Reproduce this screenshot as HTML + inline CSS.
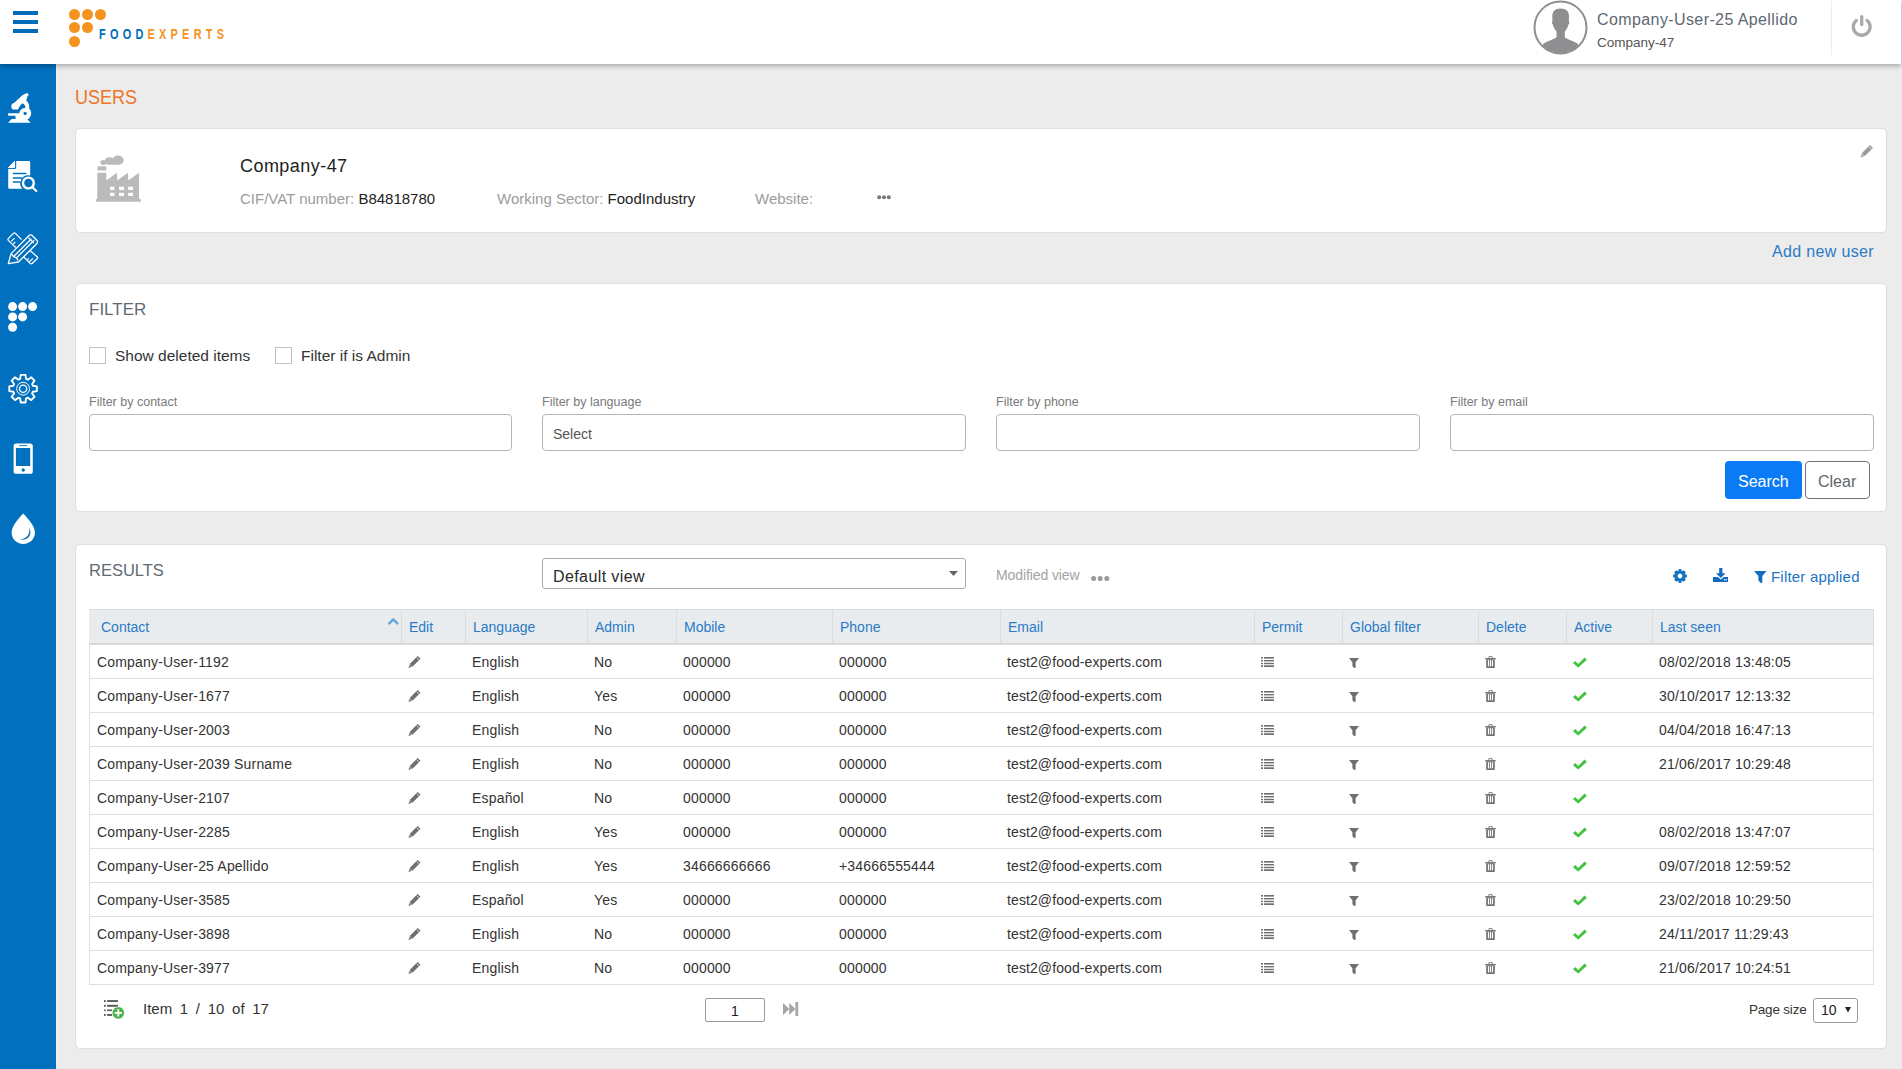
<!DOCTYPE html>
<html><head><meta charset="utf-8"><title>Users</title>
<style>
*{box-sizing:border-box;margin:0;padding:0}
html,body{width:1902px;height:1069px;overflow:hidden;background:#ececec;font-family:"Liberation Sans",sans-serif;color:#212529}
.a{position:absolute}
.t{position:absolute;white-space:nowrap;line-height:1}
#hdr{position:absolute;left:0;top:0;width:1901px;height:64px;background:#fff;box-shadow:0 2px 5px rgba(0,0,0,.3);z-index:5}
#side{position:absolute;left:0;top:64px;width:57px;height:1005px;background:#0070bf;z-index:4;border-right:1px solid #f4efef}
.bar{position:absolute;left:13px;width:25px;height:4px;background:#006bb8}
.dot{position:absolute;width:11px;height:11px;border-radius:50%;background:#f5931f}
.card{position:absolute;left:75px;width:1812px;background:#fff;border:1px solid #dedede;border-radius:5px}
.inp{position:absolute;top:414px;width:424px;height:37px;border:1px solid #b5b5b5;border-radius:4px;background:#fff}
.lbl{position:absolute;top:396px;font-size:12.5px;color:#7a7a7a;white-space:nowrap;line-height:1}
.cb{position:absolute;top:347px;width:17px;height:17px;border:1px solid #bdc2c6;background:#fff}
.th{position:absolute;top:620px;font-size:14px;color:#2a7ac4;white-space:nowrap;line-height:1}
.td{position:absolute;font-size:14px;letter-spacing:.18px;color:#333;white-space:nowrap;line-height:1}
.vl{position:absolute;top:610px;width:1px;height:33px;background:#dcdcdc}
.hl{position:absolute;left:89px;width:1785px;height:1px;background:#dedede}
svg{position:absolute;overflow:visible}
</style></head><body>
<div id="hdr">
<div class="bar" style="top:11px"></div>
<div class="bar" style="top:20px"></div>
<div class="bar" style="top:29px"></div>
<div class="dot" style="left:69px;top:9px"></div>
<div class="dot" style="left:82px;top:9px"></div>
<div class="dot" style="left:95px;top:9px"></div>
<div class="dot" style="left:69px;top:22px"></div>
<div class="dot" style="left:82px;top:22px"></div>
<div class="dot" style="left:69px;top:36px"></div>
<div class="t" style="left:99px;top:26.5px;font-size:14.5px;font-weight:bold;letter-spacing:5.7px;transform:scaleX(.75);transform-origin:0 0;color:#006bb8">FOOD<span style="color:#f5931f">EXPERTS</span></div>
<svg style="left:1533px;top:0px" width="56" height="56" viewBox="0 0 56 56">
<defs><clipPath id="avc"><circle cx="27.5" cy="27.5" r="25.5"/></clipPath></defs>
<circle cx="27.5" cy="27.5" r="26" fill="#fff" stroke="#8f8e90" stroke-width="2"/>
<g clip-path="url(#avc)" fill="#8f8e90">
<path d="M27.7 8.5 C21.5 8.5 19.2 12 19.3 16.5 L19.5 21 C18.6 21.5 18.8 23.5 19.8 24.5 C20.6 27.5 22 30 23.5 31.5 L23.5 37.5 C20 39.5 14 41 10 44 L10 56 L45 56 L45 44 C41 41 35 39.5 31.8 37.5 L31.8 31.5 C33.3 30 34.7 27.5 35.5 24.5 C36.5 23.5 36.7 21.5 35.8 21 L36 16.5 C36.1 12 33.8 8.5 27.7 8.5 Z"/>
</g></svg>
<div class="t" style="left:1597px;top:12px;font-size:16px;letter-spacing:.4px;color:#5d6873">Company-User-25 Apellido</div>
<div class="t" style="left:1597px;top:36px;font-size:13.5px;letter-spacing:0px;color:#555">Company-47</div>
<div class="a" style="left:1831px;top:1px;width:1px;height:54px;background:#ececec"></div>
<svg style="left:1850px;top:14px" width="24" height="24" viewBox="0 0 24 24">
<path d="M6.3 6.4 A8.4 8.4 0 1 0 17.1 6.4" fill="none" stroke="#a9a9a9" stroke-width="3.3" stroke-linecap="round"/>
<line x1="11.7" y1="2.7" x2="11.7" y2="10.6" stroke="#a9a9a9" stroke-width="3.3" stroke-linecap="round"/>
</svg>
</div>
<div id="side"></div>
<svg style="left:4px;top:88px;z-index:6" width="40" height="40" viewBox="0 0 40 40">
<g fill="#fff">
<path d="M4.1 34.8 L7.6 31 L11.5 31 L11.5 27.8 L4.1 27.8 L4.1 25.2 L15.2 25.2 C15.8 22 18 20 21.3 20 C21.6 18 20.8 16.8 18.4 15.3 C16.5 17 15.2 19 14 21.6 L9.5 21.6 C8 21.6 7.3 20 7.3 18 C7.3 16.5 8.5 15.2 10.3 14.8 L18.7 7 L23 5 L24.9 6.5 L23.3 8.8 L22.3 12.5 C25 14.5 25.6 17.5 25.2 20.5 C27 22.5 27.4 24 27 26.5 C26.5 29 25.2 30.6 23.4 31.5 L26.8 34.8 Z"/>
</g>
<circle cx="21.1" cy="25.4" r="1.6" fill="#0070bf"/>
</svg>
<svg style="left:4px;top:156px;z-index:6" width="40" height="40" viewBox="0 0 40 40">
<path d="M4.5 11.6 L10.6 5.2 L10.6 11.6 Z" fill="#fff" stroke="#fff" stroke-width="1" stroke-linejoin="round"/>
<path d="M12.2 5 L24.8 5 Q26.2 5 26.2 6.4 L26.2 19.6 A8 8 0 0 0 18.4 32.8 L5.6 32.8 Q4.2 32.8 4.2 31.4 L4.2 13.1 L10.5 13.1 Q12.2 13.1 12.2 11.4 Z" fill="#fff"/>
<g stroke="#0070bf" stroke-width="1.4" stroke-linecap="round"><line x1="9.4" y1="17.5" x2="21.8" y2="17.5"/><line x1="9.4" y1="22" x2="18" y2="22"/><line x1="9.4" y1="26" x2="15.6" y2="26"/></g>
<circle cx="24.4" cy="27" r="5.4" fill="none" stroke="#fff" stroke-width="2.4"/>
<line x1="28.5" y1="31.2" x2="32.3" y2="35" stroke="#fff" stroke-width="2.2" stroke-linecap="round"/>
</svg>
<svg style="left:4px;top:228px;z-index:6" width="40" height="40" viewBox="0 0 40 40">
<g fill="none" stroke="#fff" stroke-width="1.3" stroke-linejoin="round">
<path d="M11.7 19.5 L4.3 12.4 Q3.4 11.4 4.4 10.4 L9.4 5.4 Q10.4 4.4 11.4 5.4 L17.6 11.6"/>
<path d="M26.1 22.4 L33.1 28.8 Q34.1 29.8 33.1 30.8 L28.1 35.4 Q27.1 36.4 26.1 35.4 L19.6 28.8"/>
<path d="M7.2 13.4 L10.6 10.1 M9.4 15.7 L11.2 14 M23.6 31.8 L24.9 30.4 M25.4 33.9 L28.9 30.4"/>
<path d="M7.1 25.6 L24.8 7.8 Q26.6 6 28.4 7.8 L32.8 12.2 Q34.4 14 32.7 15.7 L14.4 34 L4.3 35.6 Z"/>
<path d="M7.5 25.8 L9.6 28.6 L12.5 29.9 L14 32.3 M9.6 28.6 L27.4 10.8 M12.5 29.9 L30.2 12.1 M24.4 9.6 L29.8 15"/>
</g></svg>
<svg style="left:4px;top:298px;z-index:6" width="40" height="40" viewBox="0 0 40 40"><circle cx="8.6" cy="8.6" r="4.5" fill="#fff"/><circle cx="18.6" cy="8.6" r="4.5" fill="#fff"/><circle cx="28.6" cy="8.6" r="4.5" fill="#fff"/><circle cx="8.6" cy="18.9" r="4.5" fill="#fff"/><circle cx="18.6" cy="18.9" r="4.5" fill="#fff"/><circle cx="8.6" cy="29.3" r="4.5" fill="#fff"/></svg>
<svg style="left:4px;top:368px;z-index:6" width="40" height="40" viewBox="0 0 40 40">
<path d="M16.09 10.96 L16.73 6.90 L21.47 6.90 L22.11 10.96 L23.86 11.68 L27.18 9.27 L30.53 12.62 L28.12 15.94 L28.84 17.69 L32.90 18.33 L32.90 23.07 L28.84 23.71 L28.12 25.46 L30.53 28.78 L27.18 32.13 L23.86 29.72 L22.11 30.44 L21.47 34.50 L16.73 34.50 L16.09 30.44 L14.34 29.72 L11.02 32.13 L7.67 28.78 L10.08 25.46 L9.36 23.71 L5.30 23.07 L5.30 18.33 L9.36 17.69 L10.08 15.94 L7.67 12.62 L11.02 9.27 L14.34 11.68 Z" fill="none" stroke="#fff" stroke-width="1.9" stroke-linejoin="round"/>
<circle cx="19.1" cy="20.7" r="6.4" fill="none" stroke="#fff" stroke-width="1"/>
<circle cx="19.1" cy="20.7" r="3.6" fill="none" stroke="#fff" stroke-width="1.3"/>
</svg>
<svg style="left:4px;top:438px;z-index:6" width="40" height="40" viewBox="0 0 40 40">
<path fill-rule="evenodd" fill="#fff" d="M12.2 5.5 L26.2 5.5 Q28.8 5.5 28.8 8.1 L28.8 33.2 Q28.8 35.8 26.2 35.8 L12.2 35.8 Q9.6 35.8 9.6 33.2 L9.6 8.1 Q9.6 5.5 12.2 5.5 Z M11.9 10 L26.2 10 L26.2 28 L11.9 28 Z M19.2 30.3 A1.7 1.7 0 1 0 19.21 30.3 Z"/>
<line x1="15.5" y1="7.6" x2="22.8" y2="7.6" stroke="#0070bf" stroke-width="0.9" stroke-linecap="round"/>
</svg>
<svg style="left:4px;top:508px;z-index:6" width="40" height="40" viewBox="0 0 40 40">
<path fill="#fff" d="M19.2 5.6 C15 10 7.6 18 7.6 24.6 C7.6 31.2 12.8 36 19.3 36 C25.8 36 30.9 31.2 30.9 24.6 C30.9 18 23.5 10 19.2 5.6 Z"/>
<path fill="#0070bf" d="M25.3 19 C26.8 23 26.8 26.5 24.8 29 C22.6 31.4 19.5 32.2 16.2 31.5 C19.8 31 22.5 29.6 24 27.2 C25.3 25 25.6 22 25.3 19 Z"/>
</svg>
<div class="t" style="left:75px;top:86.5px;font-size:20px;transform:scaleX(.9);transform-origin:0 0;color:#ee7627">USERS</div>
<div class="card" style="top:128px;height:105px"></div>
<svg style="left:90px;top:150px" width="60" height="60" viewBox="0 0 60 60"><g fill="#bababa">
<path d="M6 51.7 L6 49.5 L7.3 48.5 L7.3 22.8 L16.3 22.8 L16.3 30.6 L26.9 22.8 L27.3 30.4 L37.9 22.8 L38.3 30.4 L49 22.8 L49 48.5 L50.8 49.5 L50.8 51.7 Z"/>
<path d="M7.6 16.8 Q7.8 16.3 8.5 16.3 L15.6 16.3 Q16.3 16.3 16.3 17 L16.3 20.6 L7.3 20.6 Z"/>
<ellipse cx="13.4" cy="12.5" rx="3" ry="2.4"/><ellipse cx="19.3" cy="11.1" rx="4.4" ry="3.8"/><ellipse cx="28" cy="10.3" rx="5.7" ry="4.7"/><ellipse cx="23.5" cy="12.6" rx="3" ry="2.4"/>
</g><g fill="#fff">
<rect x="20" y="36.7" width="4.4" height="3.3"/><rect x="29" y="36.7" width="5" height="3.3"/><rect x="38.2" y="36.7" width="4.8" height="3.3"/>
<rect x="20" y="42.8" width="4.4" height="3.2"/><rect x="29" y="42.8" width="5" height="3.2"/><rect x="38.2" y="42.8" width="4.8" height="3.2"/>
</g></svg>
<div class="t" style="left:240px;top:157px;font-size:18px;letter-spacing:.45px;color:#222">Company-47</div>
<div class="t" style="left:240px;top:191px;font-size:15px;color:#9c9c9c">CIF/VAT number: <span style="color:#222">B84818780</span></div>
<div class="t" style="left:497px;top:191px;font-size:15px;color:#9c9c9c">Working Sector: <span style="color:#222">FoodIndustry</span></div>
<div class="t" style="left:755px;top:191px;font-size:15px;color:#9c9c9c">Website:</div>
<svg style="left:877px;top:195px" width="14" height="5" viewBox="0 0 14 5"><g fill="#777"><circle cx="2.2" cy="2.3" r="2"/><circle cx="7" cy="2.3" r="2"/><circle cx="11.8" cy="2.3" r="2"/></g></svg>
<svg style="left:1860px;top:145px" width="13" height="13" viewBox="0 0 12 12">
<line x1="3.2" y1="8.8" x2="10.6" y2="1.4" stroke="#999" stroke-width="3.8"/>
<path d="M1.9 7.5 L4.5 10.1 L0.4 11.6 Z" fill="#999"/>
<line x1="8.3" y1="1.6" x2="10.4" y2="3.7" stroke="#fff" stroke-width="0.7"/>
<line x1="1.6" y1="8.9" x2="3.1" y2="10.4" stroke="#fff" stroke-width="0.6"/>
</svg>
<div class="t" style="left:1772px;top:244px;font-size:16px;letter-spacing:.35px;color:#2b7bc6">Add new user</div>
<div class="card" style="top:283px;height:229px"></div>
<div class="t" style="left:89px;top:301px;font-size:17px;color:#5f6a74">FILTER</div>
<div class="cb" style="left:89px"></div>
<div class="t" style="left:115px;top:348px;font-size:15.5px;color:#333">Show deleted items</div>
<div class="cb" style="left:275px"></div>
<div class="t" style="left:301px;top:348px;font-size:15.5px;color:#333">Filter if is Admin</div>
<div class="lbl" style="left:89px">Filter by contact</div>
<div class="inp" style="left:89px;width:423px"></div>
<div class="lbl" style="left:542px">Filter by language</div>
<div class="inp" style="left:542px"></div>
<div class="lbl" style="left:996px">Filter by phone</div>
<div class="inp" style="left:996px"></div>
<div class="lbl" style="left:1450px">Filter by email</div>
<div class="inp" style="left:1450px"></div>
<div class="t" style="left:553px;top:427px;font-size:14px;color:#555">Select</div>
<div class="a" style="left:1725px;top:461px;width:77px;height:38px;background:#0a7bf4;border-radius:4px"></div>
<div class="t" style="left:1738px;top:473.5px;font-size:16px;color:#fff">Search</div>
<div class="a" style="left:1805px;top:461px;width:65px;height:38px;border:1px solid #6c757d;border-radius:4px;background:#fff"></div>
<div class="t" style="left:1818px;top:473.5px;font-size:16px;color:#666">Clear</div>
<div class="card" style="top:544px;height:505px"></div>
<div class="t" style="left:89px;top:562px;font-size:16.5px;color:#5f6a74">RESULTS</div>
<div class="a" style="left:542px;top:558px;width:424px;height:31px;border:1px solid #a9a9a9;border-radius:3px;background:#fff"></div>
<div class="t" style="left:553px;top:568.5px;font-size:16px;letter-spacing:.4px;color:#2a2a2a">Default view</div>
<svg style="left:949px;top:571px" width="9" height="5" viewBox="0 0 9 5"><path d="M0 0 L9 0 L4.5 5 Z" fill="#666"/></svg>
<div class="t" style="left:996px;top:568px;font-size:14px;letter-spacing:-.1px;color:#a3a3a3">Modified view</div>
<svg style="left:1091px;top:575.7px" width="19" height="6" viewBox="0 0 19 6"><g fill="#999"><circle cx="2.6" cy="2.6" r="2.5"/><circle cx="9.2" cy="2.6" r="2.5"/><circle cx="15.8" cy="2.6" r="2.5"/></g></svg>
<svg style="left:1673px;top:569px" width="14" height="14" viewBox="0 0 14 14"><path fill-rule="evenodd" fill="#106cc1" d="M11.68 5.24 L13.73 5.49 L13.73 8.51 L11.68 8.76 L11.55 9.06 L12.83 10.70 L10.70 12.83 L9.06 11.55 L8.76 11.68 L8.51 13.73 L5.49 13.73 L5.24 11.68 L4.94 11.55 L3.30 12.83 L1.17 10.70 L2.45 9.06 L2.32 8.76 L0.27 8.51 L0.27 5.49 L2.32 5.24 L2.45 4.94 L1.17 3.30 L3.30 1.17 L4.94 2.45 L5.24 2.32 L5.49 0.27 L8.51 0.27 L8.76 2.32 L9.06 2.45 L10.70 1.17 L12.83 3.30 L11.55 4.94 Z M7 4.6 A2.4 2.4 0 1 0 7.01 4.6 Z"/></svg>
<svg style="left:1713px;top:568px" width="16" height="15" viewBox="0 0 16 15"><g fill="#106cc1">
<rect x="6.2" y="0" width="3.2" height="6"/><path d="M3 5.2 L12.6 5.2 L7.8 10 Z"/>
<path d="M0 9 L4.9 9 L7.8 11.6 L10.7 9 L15 9 L15 14 L0 14 Z"/></g>
<g fill="#fff"><rect x="10.8" y="11.2" width="1.3" height="1.2"/><rect x="12.6" y="11.2" width="1.3" height="1.2"/></g></svg>
<svg style="left:1754px;top:571px" width="13" height="12" viewBox="0 0 13 12"><path d="M0 0 L12.6 0 L8.3 5 L8.3 12 L6.6 11.8 L4.4 9.6 L4.4 5 Z" fill="#106cc1"/></svg>
<div class="t" style="left:1771px;top:569px;font-size:15px;letter-spacing:.2px;color:#1a75c5">Filter applied</div>
<div class="a" style="left:89px;top:609px;width:1785px;height:36px;background:#e9ecef;border-top:1px solid #dcdcdc;border-bottom:2px solid #d9d9d9"></div>
<div class="vl" style="left:401px"></div>
<div class="vl" style="left:465px"></div>
<div class="vl" style="left:587px"></div>
<div class="vl" style="left:676px"></div>
<div class="vl" style="left:832px"></div>
<div class="vl" style="left:1000px"></div>
<div class="vl" style="left:1254px"></div>
<div class="vl" style="left:1342px"></div>
<div class="vl" style="left:1478px"></div>
<div class="vl" style="left:1566px"></div>
<div class="vl" style="left:1652px"></div>
<div class="th" style="left:101px">Contact</div>
<div class="th" style="left:409px">Edit</div>
<div class="th" style="left:473px">Language</div>
<div class="th" style="left:595px">Admin</div>
<div class="th" style="left:684px">Mobile</div>
<div class="th" style="left:840px">Phone</div>
<div class="th" style="left:1008px">Email</div>
<div class="th" style="left:1262px">Permit</div>
<div class="th" style="left:1350px">Global filter</div>
<div class="th" style="left:1486px">Delete</div>
<div class="th" style="left:1574px">Active</div>
<div class="th" style="left:1660px">Last seen</div>
<svg style="left:388px;top:617px" width="11" height="8" viewBox="0 0 11 8"><path d="M1.3 6.3 L5.3 2.3 L9.3 6.3" fill="none" stroke="#6aa6dd" stroke-width="2.6" stroke-linecap="round" stroke-linejoin="round"/></svg>
<div class="a" style="left:89px;top:645px;width:1px;height:340px;background:#dedede"></div>
<div class="a" style="left:1873px;top:609px;width:1px;height:376px;background:#dedede"></div>
<div class="hl" style="top:678px"></div>
<div class="td" style="left:97px;top:655px">Company-User-1192</div>
<svg style="left:408px;top:656px" width="12.5" height="12.5" viewBox="0 0 12 12">
<line x1="3.2" y1="8.8" x2="10.6" y2="1.4" stroke="#6f6f6f" stroke-width="3.8"/>
<path d="M1.9 7.5 L4.5 10.1 L0.4 11.6 Z" fill="#6f6f6f"/>
<line x1="8.3" y1="1.6" x2="10.4" y2="3.7" stroke="#fff" stroke-width="0.7"/>
<line x1="1.6" y1="8.9" x2="3.1" y2="10.4" stroke="#fff" stroke-width="0.6"/>
</svg>
<div class="td" style="left:472px;top:655px">English</div>
<div class="td" style="left:594px;top:655px">No</div>
<div class="td" style="left:683px;top:655px">000000</div>
<div class="td" style="left:839px;top:655px">000000</div>
<div class="td" style="left:1007px;top:655px;letter-spacing:.1px">test2@food-experts.com</div>
<svg style="left:1261px;top:657px" width="13" height="11" viewBox="0 0 13 11"><g fill="#6f6f6f">
<rect x="0" y="0" width="2" height="1.6"/><rect x="3" y="0" width="10" height="1.6"/>
<rect x="0" y="3" width="2" height="1.4"/><rect x="3" y="3" width="10" height="1.4"/>
<rect x="0" y="5.8" width="2" height="1.4"/><rect x="3" y="5.8" width="10" height="1.4"/>
<rect x="0" y="8.3" width="2" height="1.7"/><rect x="3" y="8.3" width="10" height="1.7"/>
</g></svg>
<svg style="left:1349px;top:658px" width="10" height="10" viewBox="0 0 10 10">
<path d="M0 0 L10 0 L6.6 4.2 L6.6 10 L4.8 9.8 L3.4 8.2 L3.4 4.2 Z" fill="#6f6f6f"/></svg>
<svg style="left:1485px;top:656px" width="11" height="12" viewBox="0 0 11 12">
<g fill="#6f6f6f"><path d="M3.3 2.2 L3.8 0.3 L7.3 0.3 L7.8 2.2 L6.9 2.2 L6.5 1 L4.6 1 L4.2 2.2 Z"/>
<rect x="0.2" y="2.1" width="10.6" height="1.2"/>
<path d="M1.2 3.3 L9.8 3.3 L9.8 11.2 Q9.8 11.9 9.1 11.9 L1.9 11.9 Q1.2 11.9 1.2 11.2 Z"/></g>
<g fill="#fff"><rect x="2.9" y="4.2" width="1.2" height="6.2"/><rect x="4.9" y="4.2" width="1.2" height="6.2"/><rect x="6.9" y="4.2" width="1.2" height="6.2"/></g>
</svg>
<svg style="left:1573px;top:657px" width="14" height="11" viewBox="0 0 14 11">
<path d="M0 6.2 L2.2 3.9 L5.2 6.9 L11.6 0.5 L13.9 2.8 L5.2 10.4 Z" fill="#43c23d"/></svg>
<div class="td" style="left:1659px;top:655px">08/02/2018 13:48:05</div>
<div class="hl" style="top:712px"></div>
<div class="td" style="left:97px;top:689px">Company-User-1677</div>
<svg style="left:408px;top:690px" width="12.5" height="12.5" viewBox="0 0 12 12">
<line x1="3.2" y1="8.8" x2="10.6" y2="1.4" stroke="#6f6f6f" stroke-width="3.8"/>
<path d="M1.9 7.5 L4.5 10.1 L0.4 11.6 Z" fill="#6f6f6f"/>
<line x1="8.3" y1="1.6" x2="10.4" y2="3.7" stroke="#fff" stroke-width="0.7"/>
<line x1="1.6" y1="8.9" x2="3.1" y2="10.4" stroke="#fff" stroke-width="0.6"/>
</svg>
<div class="td" style="left:472px;top:689px">English</div>
<div class="td" style="left:594px;top:689px">Yes</div>
<div class="td" style="left:683px;top:689px">000000</div>
<div class="td" style="left:839px;top:689px">000000</div>
<div class="td" style="left:1007px;top:689px;letter-spacing:.1px">test2@food-experts.com</div>
<svg style="left:1261px;top:691px" width="13" height="11" viewBox="0 0 13 11"><g fill="#6f6f6f">
<rect x="0" y="0" width="2" height="1.6"/><rect x="3" y="0" width="10" height="1.6"/>
<rect x="0" y="3" width="2" height="1.4"/><rect x="3" y="3" width="10" height="1.4"/>
<rect x="0" y="5.8" width="2" height="1.4"/><rect x="3" y="5.8" width="10" height="1.4"/>
<rect x="0" y="8.3" width="2" height="1.7"/><rect x="3" y="8.3" width="10" height="1.7"/>
</g></svg>
<svg style="left:1349px;top:692px" width="10" height="10" viewBox="0 0 10 10">
<path d="M0 0 L10 0 L6.6 4.2 L6.6 10 L4.8 9.8 L3.4 8.2 L3.4 4.2 Z" fill="#6f6f6f"/></svg>
<svg style="left:1485px;top:690px" width="11" height="12" viewBox="0 0 11 12">
<g fill="#6f6f6f"><path d="M3.3 2.2 L3.8 0.3 L7.3 0.3 L7.8 2.2 L6.9 2.2 L6.5 1 L4.6 1 L4.2 2.2 Z"/>
<rect x="0.2" y="2.1" width="10.6" height="1.2"/>
<path d="M1.2 3.3 L9.8 3.3 L9.8 11.2 Q9.8 11.9 9.1 11.9 L1.9 11.9 Q1.2 11.9 1.2 11.2 Z"/></g>
<g fill="#fff"><rect x="2.9" y="4.2" width="1.2" height="6.2"/><rect x="4.9" y="4.2" width="1.2" height="6.2"/><rect x="6.9" y="4.2" width="1.2" height="6.2"/></g>
</svg>
<svg style="left:1573px;top:691px" width="14" height="11" viewBox="0 0 14 11">
<path d="M0 6.2 L2.2 3.9 L5.2 6.9 L11.6 0.5 L13.9 2.8 L5.2 10.4 Z" fill="#43c23d"/></svg>
<div class="td" style="left:1659px;top:689px">30/10/2017 12:13:32</div>
<div class="hl" style="top:746px"></div>
<div class="td" style="left:97px;top:723px">Company-User-2003</div>
<svg style="left:408px;top:724px" width="12.5" height="12.5" viewBox="0 0 12 12">
<line x1="3.2" y1="8.8" x2="10.6" y2="1.4" stroke="#6f6f6f" stroke-width="3.8"/>
<path d="M1.9 7.5 L4.5 10.1 L0.4 11.6 Z" fill="#6f6f6f"/>
<line x1="8.3" y1="1.6" x2="10.4" y2="3.7" stroke="#fff" stroke-width="0.7"/>
<line x1="1.6" y1="8.9" x2="3.1" y2="10.4" stroke="#fff" stroke-width="0.6"/>
</svg>
<div class="td" style="left:472px;top:723px">English</div>
<div class="td" style="left:594px;top:723px">No</div>
<div class="td" style="left:683px;top:723px">000000</div>
<div class="td" style="left:839px;top:723px">000000</div>
<div class="td" style="left:1007px;top:723px;letter-spacing:.1px">test2@food-experts.com</div>
<svg style="left:1261px;top:725px" width="13" height="11" viewBox="0 0 13 11"><g fill="#6f6f6f">
<rect x="0" y="0" width="2" height="1.6"/><rect x="3" y="0" width="10" height="1.6"/>
<rect x="0" y="3" width="2" height="1.4"/><rect x="3" y="3" width="10" height="1.4"/>
<rect x="0" y="5.8" width="2" height="1.4"/><rect x="3" y="5.8" width="10" height="1.4"/>
<rect x="0" y="8.3" width="2" height="1.7"/><rect x="3" y="8.3" width="10" height="1.7"/>
</g></svg>
<svg style="left:1349px;top:726px" width="10" height="10" viewBox="0 0 10 10">
<path d="M0 0 L10 0 L6.6 4.2 L6.6 10 L4.8 9.8 L3.4 8.2 L3.4 4.2 Z" fill="#6f6f6f"/></svg>
<svg style="left:1485px;top:724px" width="11" height="12" viewBox="0 0 11 12">
<g fill="#6f6f6f"><path d="M3.3 2.2 L3.8 0.3 L7.3 0.3 L7.8 2.2 L6.9 2.2 L6.5 1 L4.6 1 L4.2 2.2 Z"/>
<rect x="0.2" y="2.1" width="10.6" height="1.2"/>
<path d="M1.2 3.3 L9.8 3.3 L9.8 11.2 Q9.8 11.9 9.1 11.9 L1.9 11.9 Q1.2 11.9 1.2 11.2 Z"/></g>
<g fill="#fff"><rect x="2.9" y="4.2" width="1.2" height="6.2"/><rect x="4.9" y="4.2" width="1.2" height="6.2"/><rect x="6.9" y="4.2" width="1.2" height="6.2"/></g>
</svg>
<svg style="left:1573px;top:725px" width="14" height="11" viewBox="0 0 14 11">
<path d="M0 6.2 L2.2 3.9 L5.2 6.9 L11.6 0.5 L13.9 2.8 L5.2 10.4 Z" fill="#43c23d"/></svg>
<div class="td" style="left:1659px;top:723px">04/04/2018 16:47:13</div>
<div class="hl" style="top:780px"></div>
<div class="td" style="left:97px;top:757px">Company-User-2039 Surname</div>
<svg style="left:408px;top:758px" width="12.5" height="12.5" viewBox="0 0 12 12">
<line x1="3.2" y1="8.8" x2="10.6" y2="1.4" stroke="#6f6f6f" stroke-width="3.8"/>
<path d="M1.9 7.5 L4.5 10.1 L0.4 11.6 Z" fill="#6f6f6f"/>
<line x1="8.3" y1="1.6" x2="10.4" y2="3.7" stroke="#fff" stroke-width="0.7"/>
<line x1="1.6" y1="8.9" x2="3.1" y2="10.4" stroke="#fff" stroke-width="0.6"/>
</svg>
<div class="td" style="left:472px;top:757px">English</div>
<div class="td" style="left:594px;top:757px">No</div>
<div class="td" style="left:683px;top:757px">000000</div>
<div class="td" style="left:839px;top:757px">000000</div>
<div class="td" style="left:1007px;top:757px;letter-spacing:.1px">test2@food-experts.com</div>
<svg style="left:1261px;top:759px" width="13" height="11" viewBox="0 0 13 11"><g fill="#6f6f6f">
<rect x="0" y="0" width="2" height="1.6"/><rect x="3" y="0" width="10" height="1.6"/>
<rect x="0" y="3" width="2" height="1.4"/><rect x="3" y="3" width="10" height="1.4"/>
<rect x="0" y="5.8" width="2" height="1.4"/><rect x="3" y="5.8" width="10" height="1.4"/>
<rect x="0" y="8.3" width="2" height="1.7"/><rect x="3" y="8.3" width="10" height="1.7"/>
</g></svg>
<svg style="left:1349px;top:760px" width="10" height="10" viewBox="0 0 10 10">
<path d="M0 0 L10 0 L6.6 4.2 L6.6 10 L4.8 9.8 L3.4 8.2 L3.4 4.2 Z" fill="#6f6f6f"/></svg>
<svg style="left:1485px;top:758px" width="11" height="12" viewBox="0 0 11 12">
<g fill="#6f6f6f"><path d="M3.3 2.2 L3.8 0.3 L7.3 0.3 L7.8 2.2 L6.9 2.2 L6.5 1 L4.6 1 L4.2 2.2 Z"/>
<rect x="0.2" y="2.1" width="10.6" height="1.2"/>
<path d="M1.2 3.3 L9.8 3.3 L9.8 11.2 Q9.8 11.9 9.1 11.9 L1.9 11.9 Q1.2 11.9 1.2 11.2 Z"/></g>
<g fill="#fff"><rect x="2.9" y="4.2" width="1.2" height="6.2"/><rect x="4.9" y="4.2" width="1.2" height="6.2"/><rect x="6.9" y="4.2" width="1.2" height="6.2"/></g>
</svg>
<svg style="left:1573px;top:759px" width="14" height="11" viewBox="0 0 14 11">
<path d="M0 6.2 L2.2 3.9 L5.2 6.9 L11.6 0.5 L13.9 2.8 L5.2 10.4 Z" fill="#43c23d"/></svg>
<div class="td" style="left:1659px;top:757px">21/06/2017 10:29:48</div>
<div class="hl" style="top:814px"></div>
<div class="td" style="left:97px;top:791px">Company-User-2107</div>
<svg style="left:408px;top:792px" width="12.5" height="12.5" viewBox="0 0 12 12">
<line x1="3.2" y1="8.8" x2="10.6" y2="1.4" stroke="#6f6f6f" stroke-width="3.8"/>
<path d="M1.9 7.5 L4.5 10.1 L0.4 11.6 Z" fill="#6f6f6f"/>
<line x1="8.3" y1="1.6" x2="10.4" y2="3.7" stroke="#fff" stroke-width="0.7"/>
<line x1="1.6" y1="8.9" x2="3.1" y2="10.4" stroke="#fff" stroke-width="0.6"/>
</svg>
<div class="td" style="left:472px;top:791px">Español</div>
<div class="td" style="left:594px;top:791px">No</div>
<div class="td" style="left:683px;top:791px">000000</div>
<div class="td" style="left:839px;top:791px">000000</div>
<div class="td" style="left:1007px;top:791px;letter-spacing:.1px">test2@food-experts.com</div>
<svg style="left:1261px;top:793px" width="13" height="11" viewBox="0 0 13 11"><g fill="#6f6f6f">
<rect x="0" y="0" width="2" height="1.6"/><rect x="3" y="0" width="10" height="1.6"/>
<rect x="0" y="3" width="2" height="1.4"/><rect x="3" y="3" width="10" height="1.4"/>
<rect x="0" y="5.8" width="2" height="1.4"/><rect x="3" y="5.8" width="10" height="1.4"/>
<rect x="0" y="8.3" width="2" height="1.7"/><rect x="3" y="8.3" width="10" height="1.7"/>
</g></svg>
<svg style="left:1349px;top:794px" width="10" height="10" viewBox="0 0 10 10">
<path d="M0 0 L10 0 L6.6 4.2 L6.6 10 L4.8 9.8 L3.4 8.2 L3.4 4.2 Z" fill="#6f6f6f"/></svg>
<svg style="left:1485px;top:792px" width="11" height="12" viewBox="0 0 11 12">
<g fill="#6f6f6f"><path d="M3.3 2.2 L3.8 0.3 L7.3 0.3 L7.8 2.2 L6.9 2.2 L6.5 1 L4.6 1 L4.2 2.2 Z"/>
<rect x="0.2" y="2.1" width="10.6" height="1.2"/>
<path d="M1.2 3.3 L9.8 3.3 L9.8 11.2 Q9.8 11.9 9.1 11.9 L1.9 11.9 Q1.2 11.9 1.2 11.2 Z"/></g>
<g fill="#fff"><rect x="2.9" y="4.2" width="1.2" height="6.2"/><rect x="4.9" y="4.2" width="1.2" height="6.2"/><rect x="6.9" y="4.2" width="1.2" height="6.2"/></g>
</svg>
<svg style="left:1573px;top:793px" width="14" height="11" viewBox="0 0 14 11">
<path d="M0 6.2 L2.2 3.9 L5.2 6.9 L11.6 0.5 L13.9 2.8 L5.2 10.4 Z" fill="#43c23d"/></svg>
<div class="hl" style="top:848px"></div>
<div class="td" style="left:97px;top:825px">Company-User-2285</div>
<svg style="left:408px;top:826px" width="12.5" height="12.5" viewBox="0 0 12 12">
<line x1="3.2" y1="8.8" x2="10.6" y2="1.4" stroke="#6f6f6f" stroke-width="3.8"/>
<path d="M1.9 7.5 L4.5 10.1 L0.4 11.6 Z" fill="#6f6f6f"/>
<line x1="8.3" y1="1.6" x2="10.4" y2="3.7" stroke="#fff" stroke-width="0.7"/>
<line x1="1.6" y1="8.9" x2="3.1" y2="10.4" stroke="#fff" stroke-width="0.6"/>
</svg>
<div class="td" style="left:472px;top:825px">English</div>
<div class="td" style="left:594px;top:825px">Yes</div>
<div class="td" style="left:683px;top:825px">000000</div>
<div class="td" style="left:839px;top:825px">000000</div>
<div class="td" style="left:1007px;top:825px;letter-spacing:.1px">test2@food-experts.com</div>
<svg style="left:1261px;top:827px" width="13" height="11" viewBox="0 0 13 11"><g fill="#6f6f6f">
<rect x="0" y="0" width="2" height="1.6"/><rect x="3" y="0" width="10" height="1.6"/>
<rect x="0" y="3" width="2" height="1.4"/><rect x="3" y="3" width="10" height="1.4"/>
<rect x="0" y="5.8" width="2" height="1.4"/><rect x="3" y="5.8" width="10" height="1.4"/>
<rect x="0" y="8.3" width="2" height="1.7"/><rect x="3" y="8.3" width="10" height="1.7"/>
</g></svg>
<svg style="left:1349px;top:828px" width="10" height="10" viewBox="0 0 10 10">
<path d="M0 0 L10 0 L6.6 4.2 L6.6 10 L4.8 9.8 L3.4 8.2 L3.4 4.2 Z" fill="#6f6f6f"/></svg>
<svg style="left:1485px;top:826px" width="11" height="12" viewBox="0 0 11 12">
<g fill="#6f6f6f"><path d="M3.3 2.2 L3.8 0.3 L7.3 0.3 L7.8 2.2 L6.9 2.2 L6.5 1 L4.6 1 L4.2 2.2 Z"/>
<rect x="0.2" y="2.1" width="10.6" height="1.2"/>
<path d="M1.2 3.3 L9.8 3.3 L9.8 11.2 Q9.8 11.9 9.1 11.9 L1.9 11.9 Q1.2 11.9 1.2 11.2 Z"/></g>
<g fill="#fff"><rect x="2.9" y="4.2" width="1.2" height="6.2"/><rect x="4.9" y="4.2" width="1.2" height="6.2"/><rect x="6.9" y="4.2" width="1.2" height="6.2"/></g>
</svg>
<svg style="left:1573px;top:827px" width="14" height="11" viewBox="0 0 14 11">
<path d="M0 6.2 L2.2 3.9 L5.2 6.9 L11.6 0.5 L13.9 2.8 L5.2 10.4 Z" fill="#43c23d"/></svg>
<div class="td" style="left:1659px;top:825px">08/02/2018 13:47:07</div>
<div class="hl" style="top:882px"></div>
<div class="td" style="left:97px;top:859px">Company-User-25 Apellido</div>
<svg style="left:408px;top:860px" width="12.5" height="12.5" viewBox="0 0 12 12">
<line x1="3.2" y1="8.8" x2="10.6" y2="1.4" stroke="#6f6f6f" stroke-width="3.8"/>
<path d="M1.9 7.5 L4.5 10.1 L0.4 11.6 Z" fill="#6f6f6f"/>
<line x1="8.3" y1="1.6" x2="10.4" y2="3.7" stroke="#fff" stroke-width="0.7"/>
<line x1="1.6" y1="8.9" x2="3.1" y2="10.4" stroke="#fff" stroke-width="0.6"/>
</svg>
<div class="td" style="left:472px;top:859px">English</div>
<div class="td" style="left:594px;top:859px">Yes</div>
<div class="td" style="left:683px;top:859px">34666666666</div>
<div class="td" style="left:839px;top:859px">+34666555444</div>
<div class="td" style="left:1007px;top:859px;letter-spacing:.1px">test2@food-experts.com</div>
<svg style="left:1261px;top:861px" width="13" height="11" viewBox="0 0 13 11"><g fill="#6f6f6f">
<rect x="0" y="0" width="2" height="1.6"/><rect x="3" y="0" width="10" height="1.6"/>
<rect x="0" y="3" width="2" height="1.4"/><rect x="3" y="3" width="10" height="1.4"/>
<rect x="0" y="5.8" width="2" height="1.4"/><rect x="3" y="5.8" width="10" height="1.4"/>
<rect x="0" y="8.3" width="2" height="1.7"/><rect x="3" y="8.3" width="10" height="1.7"/>
</g></svg>
<svg style="left:1349px;top:862px" width="10" height="10" viewBox="0 0 10 10">
<path d="M0 0 L10 0 L6.6 4.2 L6.6 10 L4.8 9.8 L3.4 8.2 L3.4 4.2 Z" fill="#6f6f6f"/></svg>
<svg style="left:1485px;top:860px" width="11" height="12" viewBox="0 0 11 12">
<g fill="#6f6f6f"><path d="M3.3 2.2 L3.8 0.3 L7.3 0.3 L7.8 2.2 L6.9 2.2 L6.5 1 L4.6 1 L4.2 2.2 Z"/>
<rect x="0.2" y="2.1" width="10.6" height="1.2"/>
<path d="M1.2 3.3 L9.8 3.3 L9.8 11.2 Q9.8 11.9 9.1 11.9 L1.9 11.9 Q1.2 11.9 1.2 11.2 Z"/></g>
<g fill="#fff"><rect x="2.9" y="4.2" width="1.2" height="6.2"/><rect x="4.9" y="4.2" width="1.2" height="6.2"/><rect x="6.9" y="4.2" width="1.2" height="6.2"/></g>
</svg>
<svg style="left:1573px;top:861px" width="14" height="11" viewBox="0 0 14 11">
<path d="M0 6.2 L2.2 3.9 L5.2 6.9 L11.6 0.5 L13.9 2.8 L5.2 10.4 Z" fill="#43c23d"/></svg>
<div class="td" style="left:1659px;top:859px">09/07/2018 12:59:52</div>
<div class="hl" style="top:916px"></div>
<div class="td" style="left:97px;top:893px">Company-User-3585</div>
<svg style="left:408px;top:894px" width="12.5" height="12.5" viewBox="0 0 12 12">
<line x1="3.2" y1="8.8" x2="10.6" y2="1.4" stroke="#6f6f6f" stroke-width="3.8"/>
<path d="M1.9 7.5 L4.5 10.1 L0.4 11.6 Z" fill="#6f6f6f"/>
<line x1="8.3" y1="1.6" x2="10.4" y2="3.7" stroke="#fff" stroke-width="0.7"/>
<line x1="1.6" y1="8.9" x2="3.1" y2="10.4" stroke="#fff" stroke-width="0.6"/>
</svg>
<div class="td" style="left:472px;top:893px">Español</div>
<div class="td" style="left:594px;top:893px">Yes</div>
<div class="td" style="left:683px;top:893px">000000</div>
<div class="td" style="left:839px;top:893px">000000</div>
<div class="td" style="left:1007px;top:893px;letter-spacing:.1px">test2@food-experts.com</div>
<svg style="left:1261px;top:895px" width="13" height="11" viewBox="0 0 13 11"><g fill="#6f6f6f">
<rect x="0" y="0" width="2" height="1.6"/><rect x="3" y="0" width="10" height="1.6"/>
<rect x="0" y="3" width="2" height="1.4"/><rect x="3" y="3" width="10" height="1.4"/>
<rect x="0" y="5.8" width="2" height="1.4"/><rect x="3" y="5.8" width="10" height="1.4"/>
<rect x="0" y="8.3" width="2" height="1.7"/><rect x="3" y="8.3" width="10" height="1.7"/>
</g></svg>
<svg style="left:1349px;top:896px" width="10" height="10" viewBox="0 0 10 10">
<path d="M0 0 L10 0 L6.6 4.2 L6.6 10 L4.8 9.8 L3.4 8.2 L3.4 4.2 Z" fill="#6f6f6f"/></svg>
<svg style="left:1485px;top:894px" width="11" height="12" viewBox="0 0 11 12">
<g fill="#6f6f6f"><path d="M3.3 2.2 L3.8 0.3 L7.3 0.3 L7.8 2.2 L6.9 2.2 L6.5 1 L4.6 1 L4.2 2.2 Z"/>
<rect x="0.2" y="2.1" width="10.6" height="1.2"/>
<path d="M1.2 3.3 L9.8 3.3 L9.8 11.2 Q9.8 11.9 9.1 11.9 L1.9 11.9 Q1.2 11.9 1.2 11.2 Z"/></g>
<g fill="#fff"><rect x="2.9" y="4.2" width="1.2" height="6.2"/><rect x="4.9" y="4.2" width="1.2" height="6.2"/><rect x="6.9" y="4.2" width="1.2" height="6.2"/></g>
</svg>
<svg style="left:1573px;top:895px" width="14" height="11" viewBox="0 0 14 11">
<path d="M0 6.2 L2.2 3.9 L5.2 6.9 L11.6 0.5 L13.9 2.8 L5.2 10.4 Z" fill="#43c23d"/></svg>
<div class="td" style="left:1659px;top:893px">23/02/2018 10:29:50</div>
<div class="hl" style="top:950px"></div>
<div class="td" style="left:97px;top:927px">Company-User-3898</div>
<svg style="left:408px;top:928px" width="12.5" height="12.5" viewBox="0 0 12 12">
<line x1="3.2" y1="8.8" x2="10.6" y2="1.4" stroke="#6f6f6f" stroke-width="3.8"/>
<path d="M1.9 7.5 L4.5 10.1 L0.4 11.6 Z" fill="#6f6f6f"/>
<line x1="8.3" y1="1.6" x2="10.4" y2="3.7" stroke="#fff" stroke-width="0.7"/>
<line x1="1.6" y1="8.9" x2="3.1" y2="10.4" stroke="#fff" stroke-width="0.6"/>
</svg>
<div class="td" style="left:472px;top:927px">English</div>
<div class="td" style="left:594px;top:927px">No</div>
<div class="td" style="left:683px;top:927px">000000</div>
<div class="td" style="left:839px;top:927px">000000</div>
<div class="td" style="left:1007px;top:927px;letter-spacing:.1px">test2@food-experts.com</div>
<svg style="left:1261px;top:929px" width="13" height="11" viewBox="0 0 13 11"><g fill="#6f6f6f">
<rect x="0" y="0" width="2" height="1.6"/><rect x="3" y="0" width="10" height="1.6"/>
<rect x="0" y="3" width="2" height="1.4"/><rect x="3" y="3" width="10" height="1.4"/>
<rect x="0" y="5.8" width="2" height="1.4"/><rect x="3" y="5.8" width="10" height="1.4"/>
<rect x="0" y="8.3" width="2" height="1.7"/><rect x="3" y="8.3" width="10" height="1.7"/>
</g></svg>
<svg style="left:1349px;top:930px" width="10" height="10" viewBox="0 0 10 10">
<path d="M0 0 L10 0 L6.6 4.2 L6.6 10 L4.8 9.8 L3.4 8.2 L3.4 4.2 Z" fill="#6f6f6f"/></svg>
<svg style="left:1485px;top:928px" width="11" height="12" viewBox="0 0 11 12">
<g fill="#6f6f6f"><path d="M3.3 2.2 L3.8 0.3 L7.3 0.3 L7.8 2.2 L6.9 2.2 L6.5 1 L4.6 1 L4.2 2.2 Z"/>
<rect x="0.2" y="2.1" width="10.6" height="1.2"/>
<path d="M1.2 3.3 L9.8 3.3 L9.8 11.2 Q9.8 11.9 9.1 11.9 L1.9 11.9 Q1.2 11.9 1.2 11.2 Z"/></g>
<g fill="#fff"><rect x="2.9" y="4.2" width="1.2" height="6.2"/><rect x="4.9" y="4.2" width="1.2" height="6.2"/><rect x="6.9" y="4.2" width="1.2" height="6.2"/></g>
</svg>
<svg style="left:1573px;top:929px" width="14" height="11" viewBox="0 0 14 11">
<path d="M0 6.2 L2.2 3.9 L5.2 6.9 L11.6 0.5 L13.9 2.8 L5.2 10.4 Z" fill="#43c23d"/></svg>
<div class="td" style="left:1659px;top:927px">24/11/2017 11:29:43</div>
<div class="hl" style="top:984px"></div>
<div class="td" style="left:97px;top:961px">Company-User-3977</div>
<svg style="left:408px;top:962px" width="12.5" height="12.5" viewBox="0 0 12 12">
<line x1="3.2" y1="8.8" x2="10.6" y2="1.4" stroke="#6f6f6f" stroke-width="3.8"/>
<path d="M1.9 7.5 L4.5 10.1 L0.4 11.6 Z" fill="#6f6f6f"/>
<line x1="8.3" y1="1.6" x2="10.4" y2="3.7" stroke="#fff" stroke-width="0.7"/>
<line x1="1.6" y1="8.9" x2="3.1" y2="10.4" stroke="#fff" stroke-width="0.6"/>
</svg>
<div class="td" style="left:472px;top:961px">English</div>
<div class="td" style="left:594px;top:961px">No</div>
<div class="td" style="left:683px;top:961px">000000</div>
<div class="td" style="left:839px;top:961px">000000</div>
<div class="td" style="left:1007px;top:961px;letter-spacing:.1px">test2@food-experts.com</div>
<svg style="left:1261px;top:963px" width="13" height="11" viewBox="0 0 13 11"><g fill="#6f6f6f">
<rect x="0" y="0" width="2" height="1.6"/><rect x="3" y="0" width="10" height="1.6"/>
<rect x="0" y="3" width="2" height="1.4"/><rect x="3" y="3" width="10" height="1.4"/>
<rect x="0" y="5.8" width="2" height="1.4"/><rect x="3" y="5.8" width="10" height="1.4"/>
<rect x="0" y="8.3" width="2" height="1.7"/><rect x="3" y="8.3" width="10" height="1.7"/>
</g></svg>
<svg style="left:1349px;top:964px" width="10" height="10" viewBox="0 0 10 10">
<path d="M0 0 L10 0 L6.6 4.2 L6.6 10 L4.8 9.8 L3.4 8.2 L3.4 4.2 Z" fill="#6f6f6f"/></svg>
<svg style="left:1485px;top:962px" width="11" height="12" viewBox="0 0 11 12">
<g fill="#6f6f6f"><path d="M3.3 2.2 L3.8 0.3 L7.3 0.3 L7.8 2.2 L6.9 2.2 L6.5 1 L4.6 1 L4.2 2.2 Z"/>
<rect x="0.2" y="2.1" width="10.6" height="1.2"/>
<path d="M1.2 3.3 L9.8 3.3 L9.8 11.2 Q9.8 11.9 9.1 11.9 L1.9 11.9 Q1.2 11.9 1.2 11.2 Z"/></g>
<g fill="#fff"><rect x="2.9" y="4.2" width="1.2" height="6.2"/><rect x="4.9" y="4.2" width="1.2" height="6.2"/><rect x="6.9" y="4.2" width="1.2" height="6.2"/></g>
</svg>
<svg style="left:1573px;top:963px" width="14" height="11" viewBox="0 0 14 11">
<path d="M0 6.2 L2.2 3.9 L5.2 6.9 L11.6 0.5 L13.9 2.8 L5.2 10.4 Z" fill="#43c23d"/></svg>
<div class="td" style="left:1659px;top:961px">21/06/2017 10:24:51</div>
<svg style="left:104px;top:999px" width="23" height="22" viewBox="0 0 23 22"><g fill="#5a5a5a">
<rect x="0" y="1.1" width="1.7" height="1.9"/><rect x="3.1" y="1.1" width="10.9" height="1.9"/>
<rect x="0" y="5.8" width="1.7" height="2"/><rect x="3.1" y="5.8" width="10.9" height="2"/>
<rect x="0" y="10.5" width="1.7" height="1.6"/><rect x="3.1" y="10.5" width="5" height="1.6"/>
<rect x="0" y="15" width="1.7" height="1.9"/><rect x="3.1" y="15" width="5" height="1.9"/></g>
<circle cx="14.3" cy="13.9" r="6.1" fill="#4cb14c" stroke="#fff" stroke-width="0.6"/>
<path d="M14.3 10.2 L14.3 17.6 M10.6 13.9 L18 13.9" stroke="#fff" stroke-width="1.8"/></svg>
<div class="t" style="left:143px;top:1001px;font-size:15px;color:#333;word-spacing:3.5px">Item 1 / 10 of 17</div>
<div class="a" style="left:705px;top:998px;width:60px;height:24px;border:1px solid #9a9a9a;border-radius:2px;background:#fff"></div>
<div class="t" style="left:731px;top:1004px;font-size:14px;color:#222">1</div>
<svg style="left:783px;top:1002px" width="16" height="14" viewBox="0 0 16 14"><g fill="#a6a6a6">
<path d="M0 1 L6.3 7 L0 13 Z"/><path d="M6.2 1 L12.5 7 L6.2 13 Z"/><rect x="12.4" y="0" width="2.8" height="14"/></g></svg>
<div class="t" style="left:1749px;top:1003px;font-size:13.5px;letter-spacing:-.2px;color:#333">Page size</div>
<div class="a" style="left:1813px;top:998px;width:45px;height:25px;border:1px solid #9a9a9a;border-radius:3px;background:#fff"></div>
<div class="t" style="left:1821px;top:1003px;font-size:14px;color:#222">10</div>
<svg style="left:1845px;top:1007px" width="6" height="5.5" viewBox="0 0 6 5.5"><path d="M0 0 L6 0 L3 5.5 Z" fill="#222"/></svg>
</body></html>
